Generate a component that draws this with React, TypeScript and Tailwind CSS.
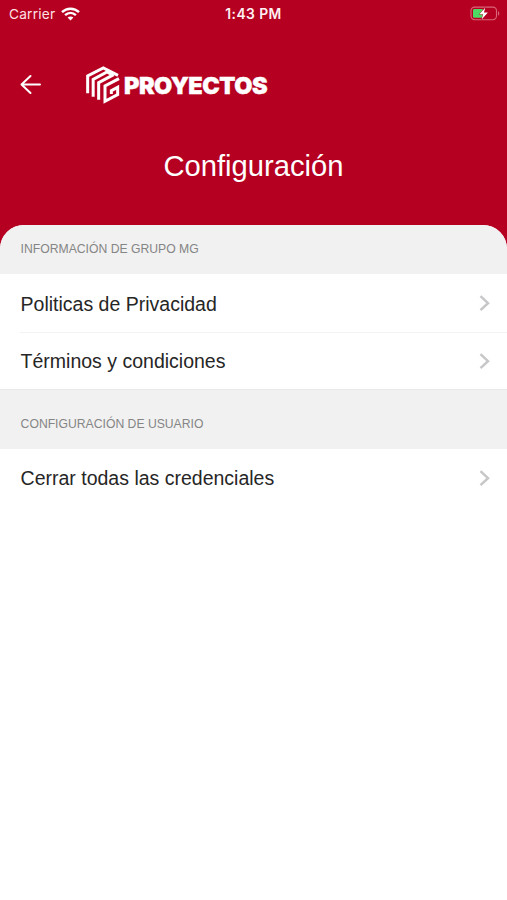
import React from "react";

function WifiIcon() {
  return (
    <svg width="19" height="14" viewBox="0 0 19 14" fill="none" stroke="#fff" strokeWidth="2.5">
      <path d="M1 5.1C5.8.5 13.2.5 18 5.1" />
      <path d="M4.1 8.2C7.3 5.2 11.7 5.2 14.9 8.2" />
      <path d="M9.5 13.6L6.6 10.6C8.3 9.1 10.7 9.1 12.4 10.6Z" fill="#fff" stroke="none" />
    </svg>
  );
}

function BatteryIcon() {
  return (
    <svg width="31" height="16" viewBox="0 0 31 16" fill="none">
      <rect x="1" y="1.1" width="25.5" height="12.6" rx="3.6" stroke="#d9667a" strokeWidth="1.1" />
      <path d="M28 5.2C29.7 5.8 29.7 9 28 9.6Z" fill="#d9667a" />
      <rect x="3" y="3" width="10" height="8.8" rx="1.2" fill="#4cd964" />
      <path d="M15.2 1.7L9.4 8.3H13.2L11.6 13.4L17.9 6.6H14Z" fill="#fff" stroke="#b50021" strokeWidth=".8" paintOrder="stroke" />
    </svg>
  );
}

function Logo() {
  return (
    <svg width="34" height="38" viewBox="227 19 102 114" fill="none" stroke="#fff" strokeWidth="9">
      <path d="M232 101V49L279 25L323 47" />
      <path d="M248.500 111V59L290 37L304 44" />
      <path d="M265 120V69L310 45" />
      <path d="M326 57L284 79V125L322 105V83L303 93V103" />
    </svg>
  );
}

function Chevron() {
  return (
    <svg width="12" height="18" viewBox="0 0 12 18" fill="none" stroke="#c7c7c9" strokeWidth="2.5">
      <path d="M1.5 2.2L9 9.2L1.5 16.2" />
    </svg>
  );
}

function Row({ label, divider }: { label: string; divider?: boolean }) {
  return (
    <div className="pl-[20px]">
      <div className={`flex items-center justify-between pr-[16px] ${divider ? "h-[59px] border-b border-[#f3f3f3]" : "h-[57px]"}`}>
        <span className="pl-[0.6px] pt-px text-[19.5px] leading-6 text-[#262626]">{label}</span>
        <Chevron />
      </div>
    </div>
  );
}

export default function App() {
  return (
    <div className="h-[900px] w-[507px] overflow-hidden bg-white font-['Liberation_Sans',Arial,sans-serif]">
      <header className="h-[249px] bg-[#b50021] text-white">
        <div className="grid h-[28px] grid-cols-3 items-center pl-[9px] pr-[6px] font-['Inter',sans-serif] text-[13px]">
          <div className="flex items-center gap-[6px]">
            <span className="text-[13.7px] tracking-[0.2px] text-[#ffe0e3]">Carrier</span>
            <WifiIcon />
          </div>
          <span className="whitespace-nowrap pr-[3px] text-center text-[13.8px] font-semibold tracking-[0.45px] text-[#fff0f2]">1:43 PM</span>
          <div className="flex justify-end"><BatteryIcon /></div>
        </div>
        <div className="flex h-[114px] items-center pl-[20px]">
          <svg width="22" height="22" viewBox="0 0 22 22" fill="none" stroke="#fff" strokeWidth="2" strokeLinecap="round" strokeLinejoin="round">
            <path d="M10.5 2L1.5 10.5L10.5 19M1.5 10.5H20" />
          </svg>
          <div className="ml-[44px] flex items-center">
            <Logo />
            <span className="ml-[4px] pt-[2px] font-['Inter',sans-serif] text-[23.5px] font-black leading-none tracking-[-0.5px] [-webkit-text-stroke:0.4px_white]">PROYECTOS</span>
          </div>
        </div>
        <h1 className="pt-[5px] text-center text-[29.2px] leading-[38px]">Configuración</h1>
      </header>
      <main className="-mt-[24px] overflow-hidden rounded-t-[24px] bg-white">
        <h2 className="h-[49px] bg-[#f1f1f1] pl-[20.6px] text-[12.2px] leading-[49px] text-[#858585]">INFORMACIÓN DE GRUPO MG</h2>
        <Row label="Politicas de Privacidad" divider />
        <div className="-mt-px">
          <Row label="Términos y condiciones" />
        </div>
        <h2 className="h-[60px] border-t border-[#e8e8e8] bg-[#f1f1f1] pl-[20.6px] pt-[10px] text-[12.2px] leading-[49px] text-[#858585]">CONFIGURACIÓN DE USUARIO</h2>
        <Row label="Cerrar todas las credenciales" />
      </main>
    </div>
  );
}
